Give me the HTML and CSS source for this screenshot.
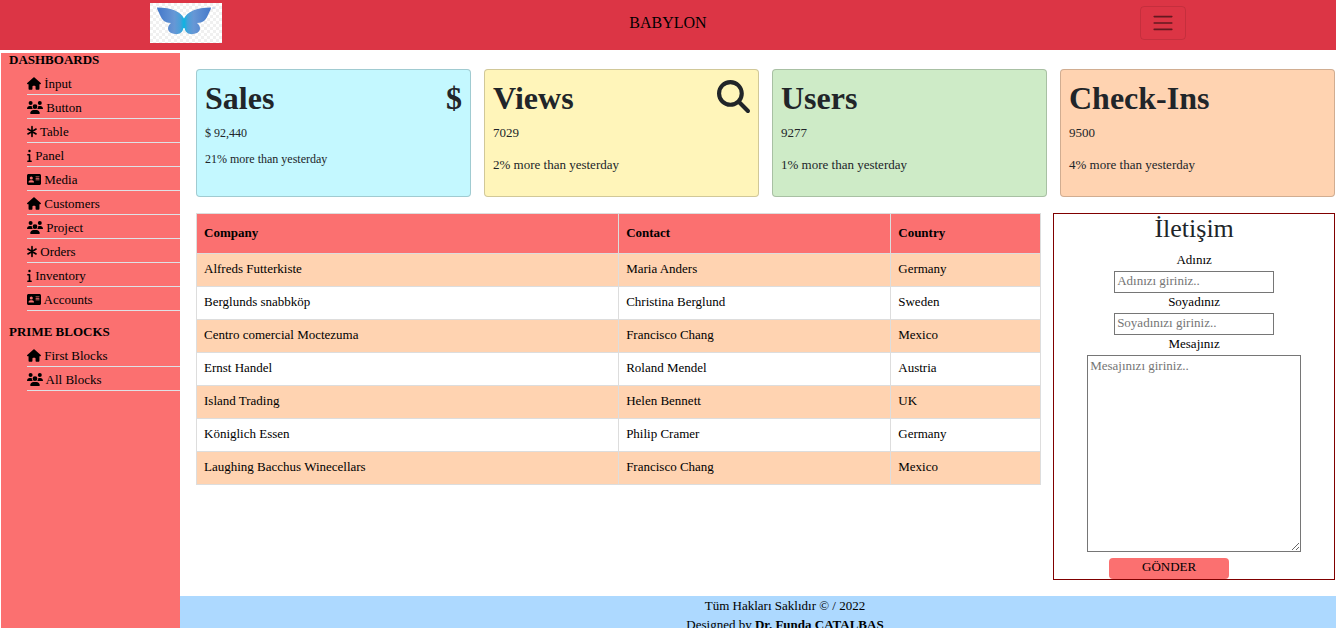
FILE: index.html
```html
<!DOCTYPE html>
<html lang="tr">
<head>
<meta charset="utf-8">
<meta name="viewport" content="width=device-width, initial-scale=1">
<title>Babylon</title>
<link rel="stylesheet" href="styles.css">
</head>
<body>
<svg class="sprite" aria-hidden="true">
  <symbol id="house" viewBox="0 0 576 512"><path d="M575.8 255.5c0 18-15 32.1-32 32.1h-32l.7 160.2c0 2.7-.2 5.4-.5 8.1V472c0 22.1-17.9 40-40 40H392c-22.1 0-40-17.9-40-40V384c0-17.7-14.3-32-32-32H256c-17.7 0-32 14.3-32 32v88c0 22.1-17.9 40-40 40H104c-22.1 0-40-17.9-40-40V287.6H32c-18 0-32-14-32-32.1c0-9 3-17 10-24L266.4 8c7-7 15-8 22-8s15 2 21 7L564.8 231.5c8 7 12 15 11 24z"/></symbol>
  <symbol id="users" viewBox="0 0 640 512"><path d="M144 0a80 80 0 1 1 0 160A80 80 0 1 1 144 0zM512 0a80 80 0 1 1 0 160A80 80 0 1 1 512 0zM0 298.7C0 239.8 47.8 192 106.7 192h42.7c15.9 0 31 3.5 44.6 9.7c-1.3 7.2-1.9 14.7-1.9 22.3c0 38.2 16.8 72.5 43.3 96H21.3C9.6 320 0 310.4 0 298.7zM405.3 320c26.6-23.5 43.3-57.8 43.3-96c0-7.6-.7-15-1.9-22.3c13.6-6.3 28.7-9.7 44.6-9.7h42.7C592.2 192 640 239.8 640 298.7c0 11.8-9.6 21.3-21.3 21.3H405.3zM224 224a96 96 0 1 1 192 0 96 96 0 1 1 -192 0zM128 485.3C128 411.7 187.7 352 261.3 352H378.7C452.3 352 512 411.7 512 485.3c0 14.7-11.9 26.7-26.7 26.7H154.7c-14.7 0-26.7-11.9-26.7-26.7z"/></symbol>
  <symbol id="asterisk" viewBox="0 0 384 512"><path d="M192 64v384M32 160l320 192M352 160L32 352" fill="none" stroke="currentColor" stroke-width="64" stroke-linecap="round"/></symbol>
  <symbol id="info" viewBox="0 0 192 512"><path d="M48 80a48 48 0 1 1 96 0A48 48 0 1 1 48 80zM0 224c0-17.7 14.3-32 32-32H96c17.7 0 32 14.3 32 32V448h32c17.7 0 32 14.3 32 32s-14.3 32-32 32H32c-17.7 0-32-14.3-32-32s14.3-32 32-32H64V256H32c-17.7 0-32-14.3-32-32z"/></symbol>
  <symbol id="card" viewBox="0 0 576 512"><path fill-rule="evenodd" d="M64 32C28.700 32 0 60.700 0 96V416c0 35.300 28.700 64 64 64H512c35.300 0 64-28.700 64-64V96c0-35.300-28.700-64-64-64H64zM144 288h64c44.200 0 80 35.800 80 80c0 8.800-7.200 16-16 16H80c-8.800 0-16-7.200-16-16c0-44.200 35.800-80 80-80zM112 192a64 64 0 1 1 128 0a64 64 0 1 1-128 0zM368 128H496c8.800 0 16 7.200 16 16s-7.200 16-16 16H368c-8.800 0-16-7.200-16-16s7.200-16 16-16zM368 192H496c8.800 0 16 7.200 16 16s-7.200 16-16 16H368c-8.800 0-16-7.200-16-16s7.200-16 16-16zM368 256H496c8.800 0 16 7.200 16 16s-7.200 16-16 16H368c-8.800 0-16-7.200-16-16s7.200-16 16-16z"/></symbol>
</svg>

<header class="topbar">
  <svg class="logo" viewBox="0 0 72 40" role="img" aria-label="Babylon logo">
    <defs>
      <pattern id="check" width="6" height="6" patternUnits="userSpaceOnUse"><path fill="#fff" d="M0 0h6v6H0z"/><path fill="#f0f0f0" d="M0 0h3v3H0zM3 3h3v3H3z"/></pattern>
      <linearGradient id="wing" gradientUnits="userSpaceOnUse" x1="7" y1="0" x2="61" y2="0">
        <stop offset="0" stop-color="#4478ca"/><stop offset=".32" stop-color="#6797d5"/><stop offset=".43" stop-color="#4a9fd9"/><stop offset=".5" stop-color="#0db4e2"/><stop offset=".57" stop-color="#4a9fd9"/><stop offset=".68" stop-color="#6797d5"/><stop offset="1" stop-color="#4478ca"/>
      </linearGradient>
    </defs>
    <path fill="url(#check)" d="M0 0h72v40H0z"/>
    <path fill="url(#wing)" d="M34 15.500C31 9 22 4.500 7 4.500C7 7 9 9 10 12C12 17 15 20 21 20C17 23 17 28 21 30C26 32 32 32 33.500 25H34.500C36 32 42 32 47 30C51 28 51 23 47 20C53 20 56 17 58 12C59 9 61 7 61 4.500C46 4.500 37 9 34 15.500z"/>
    <path d="M62 5h3" stroke="#b9cbea"/>
  </svg>
  <span class="brand">BABYLON</span>
  <button class="toggler" type="button" aria-label="Menu">
    <svg class="bars" viewBox="0 0 30 30"><path d="M4 7h22M4 15h22M4 23h22" fill="none" stroke="currentColor" stroke-width="2" stroke-linecap="round"/></svg>
  </button>
</header>

<div class="layout">
  <nav class="sidebar">
    <h2 class="nav-title">DASHBOARDS</h2>
    <ul class="nav-list">
      <li><a href="#"><svg class="icon wide"><use href="#house"/></svg> İnput</a></li>
      <li><a href="#"><svg class="icon widest"><use href="#users"/></svg> Button</a></li>
      <li><a href="#"><svg class="icon medium"><use href="#asterisk"/></svg> Table</a></li>
      <li><a href="#"><svg class="icon narrow"><use href="#info"/></svg> Panel</a></li>
      <li><a href="#"><svg class="icon wide"><use href="#card"/></svg> Media</a></li>
      <li><a href="#"><svg class="icon wide"><use href="#house"/></svg> Customers</a></li>
      <li><a href="#"><svg class="icon widest"><use href="#users"/></svg> Project</a></li>
      <li><a href="#"><svg class="icon medium"><use href="#asterisk"/></svg> Orders</a></li>
      <li><a href="#"><svg class="icon narrow"><use href="#info"/></svg> Inventory</a></li>
      <li><a href="#"><svg class="icon wide"><use href="#card"/></svg> Accounts</a></li>
    </ul>
    <h2 class="nav-title">PRIME BLOCKS</h2>
    <ul class="nav-list">
      <li><a href="#"><svg class="icon wide"><use href="#house"/></svg> First Blocks</a></li>
      <li><a href="#"><svg class="icon widest"><use href="#users"/></svg> All Blocks</a></li>
    </ul>
  </nav>

  <div class="page">
    <main class="content">
      <section class="cards">
        <article class="card sales">
          <h1 class="card-title">Sales <span>$</span></h1>
          <p>$ 92,440</p>
          <p>21% more than yesterday</p>
        </article>
        <article class="card views">
          <h1 class="card-title">Views <svg class="search" viewBox="0 0 512 512" aria-hidden="true"><path d="M416 208c0 45.900-14.900 88.300-40 122.700L502.600 457.400c12.500 12.500 12.500 32.800 0 45.300s-32.800 12.500-45.300 0L330.700 376c-34.400 25.200-76.800 40-122.700 40C93.100 416 0 322.900 0 208S93.100 0 208 0S416 93.100 416 208zM208 352a144 144 0 1 0 0-288 144 144 0 1 0 0 288z"/></svg></h1>
          <p>7029</p>
          <p>2% more than yesterday</p>
        </article>
        <article class="card users">
          <h1 class="card-title">Users</h1>
          <p>9277</p>
          <p>1% more than yesterday</p>
        </article>
        <article class="card checkins">
          <h1 class="card-title">Check-Ins</h1>
          <p>9500</p>
          <p>4% more than yesterday</p>
        </article>
      </section>

      <section class="details">
        <table class="companies">
          <colgroup><col class="col-company"><col><col class="col-country"></colgroup>
          <thead><tr><th scope="col">Company</th><th scope="col">Contact</th><th scope="col">Country</th></tr></thead>
          <tbody>
            <tr><td>Alfreds Futterkiste</td><td>Maria Anders</td><td>Germany</td></tr>
            <tr><td>Berglunds snabbköp</td><td>Christina Berglund</td><td>Sweden</td></tr>
            <tr><td>Centro comercial Moctezuma</td><td>Francisco Chang</td><td>Mexico</td></tr>
            <tr><td>Ernst Handel</td><td>Roland Mendel</td><td>Austria</td></tr>
            <tr><td>Island Trading</td><td>Helen Bennett</td><td>UK</td></tr>
            <tr><td>Königlich Essen</td><td>Philip Cramer</td><td>Germany</td></tr>
            <tr><td>Laughing Bacchus Winecellars</td><td>Francisco Chang</td><td>Mexico</td></tr>
          </tbody>
        </table>

        <form class="contact">
          <h2 class="contact-title">İletişim</h2>
          <label for="first">Adınız</label>
          <input id="first" type="text" placeholder="Adınızı giriniz..">
          <label for="last">Soyadınız</label>
          <input id="last" type="text" placeholder="Soyadınızı giriniz..">
          <label for="message">Mesajınız</label>
          <textarea id="message" placeholder="Mesajınızı giriniz.."></textarea>
          <button class="send" type="button">GÖNDER</button>
        </form>
      </section>
    </main>

    <footer class="footer">
      <p>Tüm Hakları Saklıdır © / 2022</p>
      <p>Designed by <strong>Dr. Funda CATALBAS</strong></p>
    </footer>
  </div>
</div>
</body>
</html>
```

FILE: styles.css
```css
* {
  box-sizing: border-box;
  margin: 0;
  padding: 0;
}

body {
  display: flex;
  flex-direction: column;
  gap: 3px;
  height: 100vh;
  overflow: hidden;
  background: #fff;
  color: #000;
  font: 13px/18px "Liberation Serif", "Times New Roman", serif;
}

.sprite {
  position: absolute;
  width: 0;
  height: 0;
}

.topbar {
  display: grid;
  grid-template-columns: 1fr auto 1fr;
  align-items: center;
  flex: none;
  padding: 3px 11.25% 7px;
  background: #dc3545;
}

.logo {
  width: 72px;
  height: 40px;
}

.brand {
  font-size: 16px;
  line-height: 24px;
}

.toggler {
  justify-self: end;
  display: flex;
  padding: 4px 10px;
  border: 1px solid rgba(0, 0, 0, 0.1);
  border-radius: 4px;
  background: transparent;
  color: rgba(0, 0, 0, 0.55);
}

.bars {
  width: 24px;
  height: 24px;
}

.layout {
  display: flex;
  flex: 1;
  min-height: 0;
}

.sidebar {
  flex: none;
  width: 179px;
  margin-left: 1px;
  padding-left: 8px;
  background: #fb7070;
}

.nav-title {
  font-size: 13px;
  line-height: 14px;
}

.nav-list {
  margin: 4px 0 14px 18px;
  list-style: none;
}

.nav-list li {
  height: 24px;
  padding-top: 4px;
  border-bottom: 1px solid #dee2e6;
}

.nav-list a {
  display: block;
  color: inherit;
  text-decoration: none;
}

.icon {
  height: 13px;
  vertical-align: -2px;
  fill: currentColor;
}

.narrow { width: 5px; }
.medium { width: 10px; }
.wide { width: 14px; }
.widest { width: 16px; }

.page {
  display: flex;
  flex-direction: column;
  flex: 1;
  min-width: 0;
}

.content {
  display: flex;
  flex-direction: column;
  gap: 16px;
  padding: 16px 1px 16px 16px;
}

.cards {
  display: grid;
  grid-template-columns: repeat(4, 1fr);
  gap: 13px;
}

.card {
  display: flex;
  flex-direction: column;
  gap: 14px;
  min-height: 128px;
  padding: 8px;
  border: 1px solid rgba(0, 0, 0, 0.18);
  border-radius: 4px;
  color: #212529;
}

.card-title {
  display: flex;
  justify-content: space-between;
  align-items: center;
  margin-bottom: -8px;
  font-size: 32px;
  line-height: 40px;
}

.search {
  width: 33px;
  height: 33px;
  margin-bottom: 4px;
  fill: currentColor;
}

.sales {
  gap: 8px;
  background-color: #c4f8ff;
  font-size: 12px;
}

.sales .card-title { margin-bottom: -2px; }
.views { background-color: #fff5ba; }
.users { background-color: #ceebc7; }
.checkins { background-color: #ffd3b1; }

.details {
  display: grid;
  grid-template-columns: 3fr 1fr;
  align-items: start;
  gap: 12px;
}

.companies {
  width: 100%;
  table-layout: fixed;
  border-collapse: collapse;
}

.col-company { width: 50%; }
.col-country { width: 150px; }

.companies th,
.companies td {
  padding: 6px 7px 8px;
  border: 1px solid #ddd;
  text-align: left;
}

.companies th {
  padding: 10px 7px 11px;
  background: #fb7070;
}

.companies tbody tr:nth-child(odd) {
  background: #ffd3b1;
}

.contact {
  display: flex;
  flex-direction: column;
  align-items: center;
  border: 1px solid #800000;
}

.contact-title {
  margin-bottom: 8px;
  color: #212529;
  font-size: 26px;
  font-weight: 400;
  line-height: 29px;
}

.contact label {
  padding-bottom: 2px;
}

.contact input,
.contact textarea {
  padding: 1px 2px;
  border: 1px solid #767676;
  border-radius: 0;
  background: #fff;
  font: inherit;
}

.contact input {
  width: 160px;
  height: 22px;
  padding-bottom: 3px;
}

.contact textarea {
  width: 214px;
  height: 197px;
}

.send {
  width: 120px;
  margin: 6px 50px 0 0;
  padding: 0 0 3px;
  border: 0;
  border-radius: 4px;
  background: #fb7070;
  color: #000;
  font: inherit;
}

.footer {
  flex: 1;
  padding-left: 54px;
  background: #add9ff;
  line-height: 19px;
  text-align: center;
}
```
